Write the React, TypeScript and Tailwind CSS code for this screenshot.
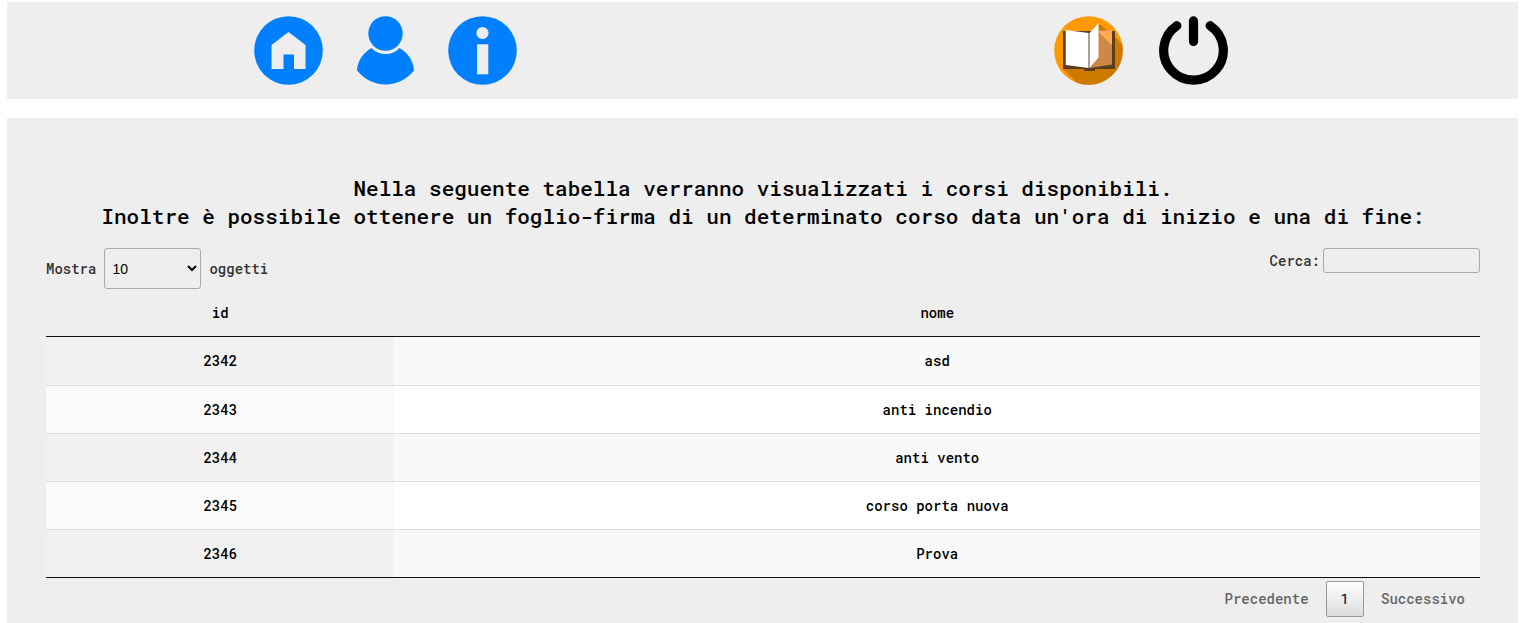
import React from "react";

const courses = [
  { id: 2342, nome: "asd" },
  { id: 2343, nome: "anti incendio" },
  { id: 2344, nome: "anti vento" },
  { id: 2345, nome: "corso porta nuova" },
  { id: 2346, nome: "Prova" },
];

function HomeIcon() {
  return (
    <svg viewBox="0 0 69 69" className="size-[69px]" aria-hidden="true">
      <circle cx="34.5" cy="34.5" r="34.3" fill="#0080ff" />
      <path d="M34.5 16 51.5 29v24H40V38.5H29.5V53h-12V29z" fill="#eeeeee" />
    </svg>
  );
}

function UserIcon() {
  return (
    <svg viewBox="0 0 69 69" className="size-[69px]" aria-hidden="true">
      <path
        d="M20.5 32C12 37 6.500 45 6 54.500C13 63 23 68.500 34.500 68.500S56 63 63 54.500C62.500 45 57 37 48.500 32C45 36 40 38 34.500 38S24 36 20.500 32Z"
        fill="#0080ff"
      />
      <circle cx="34.5" cy="17.5" r="17.2" fill="#0080ff" />
    </svg>
  );
}

function InfoIcon() {
  return (
    <svg viewBox="0 0 69 69" className="size-[69px]" aria-hidden="true">
      <circle cx="34.5" cy="34.5" r="34.3" fill="#0080ff" />
      <circle cx="34.5" cy="17" r="6.1" fill="#eeeeee" />
      <path d="M29 28.300h11.300v30H29z" fill="#eeeeee" />
    </svg>
  );
}

function BookIcon() {
  return (
    <svg viewBox="0 0 69 69" className="size-[69px]" aria-hidden="true">
      <defs>
        <clipPath id="disc">
          <circle cx="34.5" cy="34.5" r="34.3" />
        </clipPath>
      </defs>
      <g clipPath="url(#disc)">
        <path d="M0 0h69v69H0z" fill="#ff9900" />
        <path d="M9 53 44.500 7 60 20 69 29v40H25z" fill="#cc7a00" />
        <path d="M9 15h52v38H41v2H30v-2H9z" fill="#5c3d1e" />
        <path d="M11.700 14 34.500 17v35L11.700 49z" fill="#fff" />
        <path d="M58 14v34.500L36 52l8.500-38z" fill="#cc8844" />
        <path d="M44 15.500 58 14v15.500z" fill="#ffaa55" />
        <path d="M35.500 17 44.500 7v34.500L35.500 52z" fill="#fff" />
        <path d="M35 17v35" stroke="#aaa49e" strokeWidth="1.2" />
      </g>
    </svg>
  );
}

function PowerIcon() {
  return (
    <svg
      viewBox="0 0 69 69"
      className="size-[69px]"
      fill="none"
      stroke="#000"
      strokeWidth="9.2"
      strokeLinecap="round"
      aria-hidden="true"
    >
      <path d="M17.800 9.700A29.800 29.800 0 1 0 51.200 9.700" />
      <path d="M34.500 4.900v20.500" />
    </svg>
  );
}

export default function App() {
  return (
    <div className="px-[7px] pt-[2px] pr-[3px] font-['Roboto_Mono','DejaVu_Sans_Mono',monospace] text-sm font-medium text-black">
      <nav className="grid h-[97px] grid-cols-2 items-center bg-[#eeeeee] pl-px">
        <div className="flex justify-center gap-7">
          <a href="#home" aria-label="Home"><HomeIcon /></a>
          <a href="#profilo" aria-label="Profilo"><UserIcon /></a>
          <a href="#info" aria-label="Informazioni"><InfoIcon /></a>
        </div>
        <div className="flex justify-center gap-9">
          <a href="#corsi" aria-label="Corsi"><BookIcon /></a>
          <a href="#esci" aria-label="Esci"><PowerIcon /></a>
        </div>
      </nav>

      <main className="mt-[19px] bg-[#eeeeee] pt-14 pr-[38px] pb-1.5 pl-[39px]">
        <h1 className="text-center text-[21px] leading-7">
          Nella seguente tabella verranno visualizzati i corsi disponibili.
          <br />
          Inoltre è possibile ottenere un foglio-firma di un determinato corso data un'ora di inizio e una di fine:
        </h1>

        <div className="mt-[18px] flex items-start justify-between text-[#333]">
          <label className="flex items-center gap-2">
            Mostra
            <select
              defaultValue="10"
              className="h-[41px] w-[97px] rounded-[3px] border border-[#aaa] bg-transparent px-[3px] font-['Liberation_Sans',sans-serif] text-sm font-normal text-black"
            >
              <option>10</option>
              <option>25</option>
              <option>50</option>
              <option>100</option>
            </select>
            oggetti
          </label>
          <label className="flex items-center gap-[3px]">
            Cerca:
            <input type="search" className="h-[25px] w-[157px] rounded-[3px] border border-[#aaa] bg-transparent px-1" />
          </label>
        </div>

        <table className="w-full table-fixed border-separate border-spacing-0 border-b border-[#111] text-center">
          <thead>
            <tr className="h-12">
              <th className="w-[24.3%] border-b border-[#111] font-medium">id</th>
              <th className="border-b border-[#111] font-medium">nome</th>
            </tr>
          </thead>
          <tbody>
            {courses.map((course) => (
              <tr key={course.id} className="group h-12 odd:bg-[#f9f9f9] even:bg-white">
                <td className="border-t border-[#ddd] group-first:border-t-0 group-odd:bg-[#f1f1f1] group-even:bg-[#fafafa]">
                  {course.id}
                </td>
                <td className="border-t border-[#ddd] group-first:border-t-0">{course.nome}</td>
              </tr>
            ))}
          </tbody>
        </table>

        <div className="mt-[3px] flex justify-end gap-0.5">
          <button type="button" className="h-9 px-[15px] text-[#666]">Precedente</button>
          <button
            type="button"
            className="h-9 rounded-[2px] border border-[#979797] bg-linear-to-b from-white to-[#dcdcdc] px-3.5 text-[#333]"
          >
            1
          </button>
          <button type="button" className="h-9 px-[15px] text-[#666]">Successivo</button>
        </div>
      </main>
    </div>
  );
}
